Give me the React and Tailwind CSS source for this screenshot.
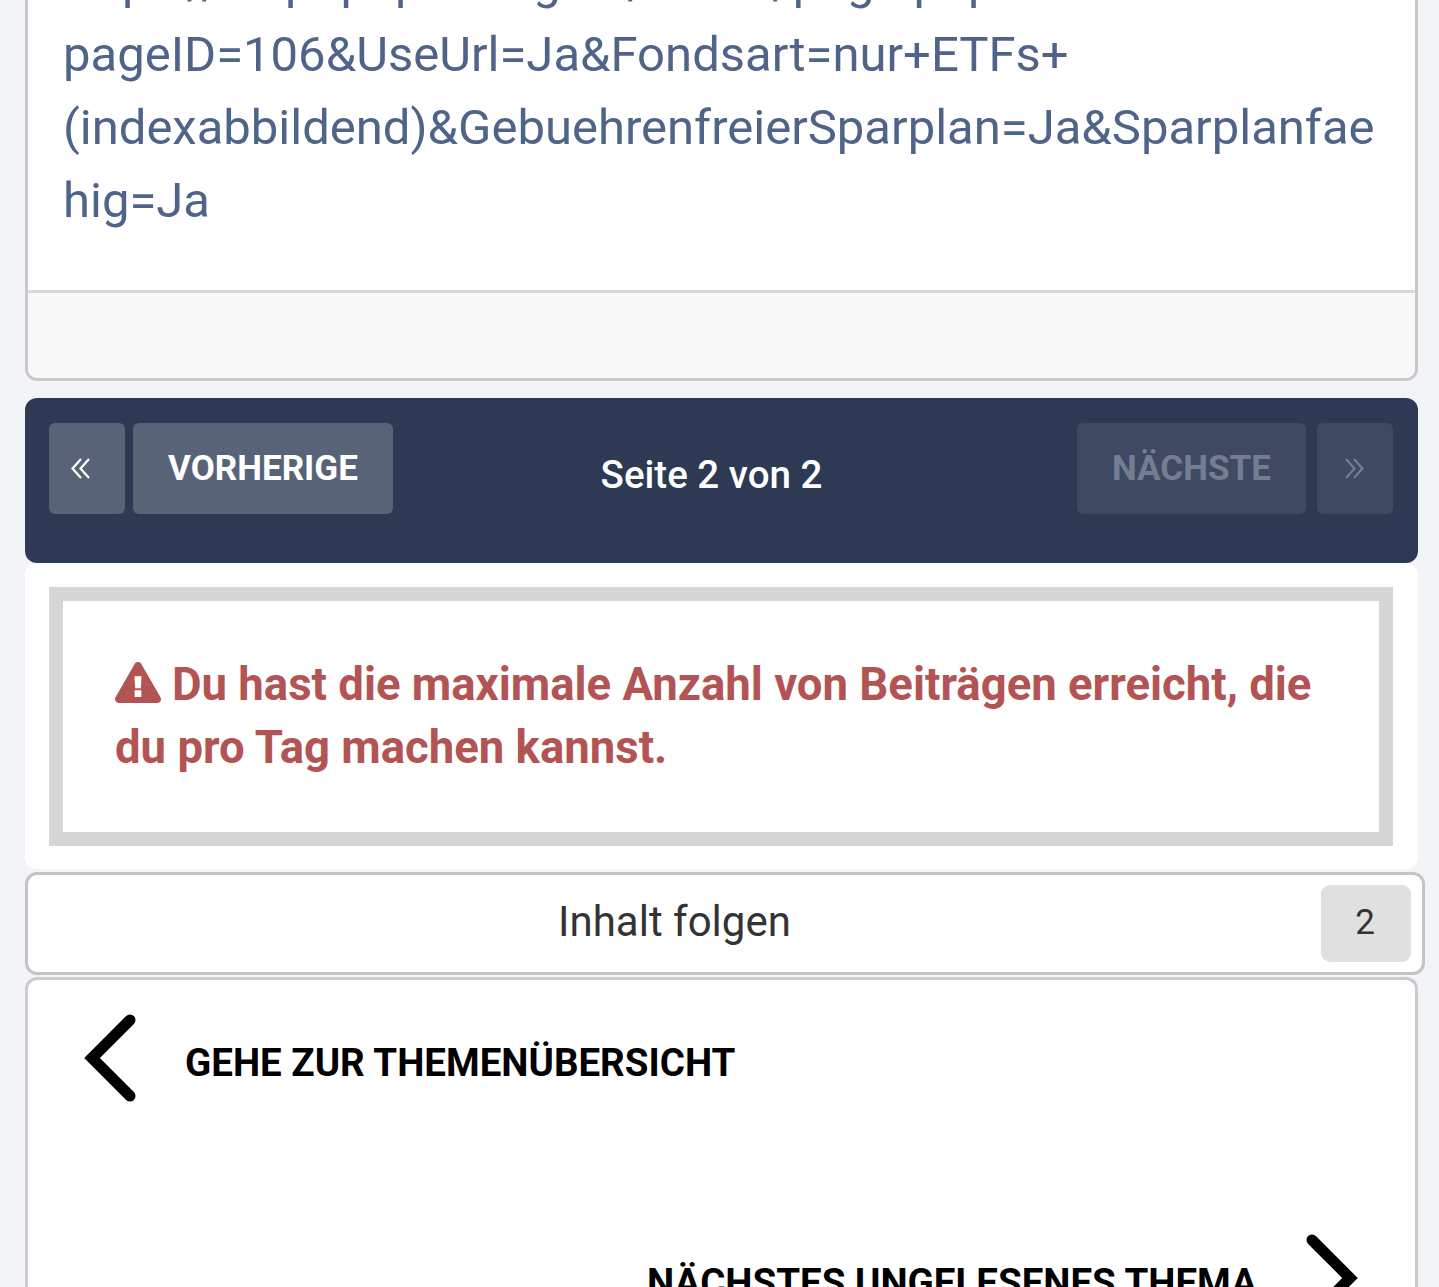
function Warning() {
  return (
    <svg viewBox="0 0 576 512" className="inline-block w-[46px] h-[41px] align-[-3px] mr-[11px]" fill="#b35454">
      <path d="M569.5 440C588 472 564.8 512 527.9 512H48.1c-37 0-60-40-41.6-72L246.4 24c18.500-32 64.700-32 83.200 0l239.900 416zM246 354v84h84v-84h-84zm-2-177l8 150h72l8-150h-88z" />
    </svg>
  )
}

function Chevron({ dir }) {
  return (
    <svg viewBox="0 0 52 88" className="w-[52px] h-[88px] shrink-0" fill="none" stroke="#000" strokeWidth="11" strokeLinecap="round" strokeLinejoin="miter">
      <path d={dir === 'left' ? 'M46 6 L8 44 L46 82' : 'M6 6 L44 44 L6 82'} />
    </svg>
  )
}

function DoubleArrow({ dir }) {
  return (
    <svg viewBox="0 0 19 21" className="w-[19px] h-[21px]" fill="none" stroke="currentColor" strokeWidth="2.2">
      <path d={dir === 'left' ? 'M10 1 L1.500 10.500 L10 20 M18 1 L9.500 10.500 L18 20' : 'M1 1 L9.500 10.500 L1 20 M9 1 L17.500 10.500 L9 20'} />
    </svg>
  )
}

export default function App() {
  return (
    <div className="h-[1287px] overflow-hidden bg-[#f2f4f8] font-['Roboto',sans-serif]">
      <div className="w-[1393px] ml-[25px]">
        {/* post card, scrolled off the top */}
        <div className="-mt-[55px] rounded-b-[12px] border-x-[3px] border-b-[3px] border-[#c9c9c9] bg-white">
          <div className="h-[345px] px-[35px] text-[49px] leading-[73px] text-[#4f6488] whitespace-nowrap">
            <div>https://ex.popup-rating.de/fonds/page.php?</div>
            <div>pageID=106&amp;UseUrl=Ja&amp;Fondsart=nur+ETFs+</div>
            <div>(indexabbildend)&amp;GebuehrenfreierSparplan=Ja&amp;Sparplanfae</div>
            <div>hig=Ja</div>
          </div>
          <div className="h-[88px] rounded-b-[9px] border-t-[3px] border-[#d9d9d9] bg-[#f8f8f8]" />
        </div>

        {/* pagination */}
        <div className="mt-[17px] h-[165px] rounded-[12px] bg-[#2e3954] pl-[24px] pr-[25px] pt-[25px] flex items-start">
          <div className="flex h-[91px] w-[76px] items-center justify-center rounded-[6px] bg-[#586377] pr-[13px] text-white">
            <DoubleArrow dir="left" />
          </div>
          <div className="ml-[8px] flex h-[91px] w-[260px] items-center justify-center rounded-[6px] bg-[#586377] pt-[2px] text-[35px] font-bold text-white">
            VORHERIGE
          </div>
          <div className="flex-1 pt-[29px] pr-[47px] text-center text-[38.500px] leading-[46px] font-medium text-white">Seite 2 von 2</div>
          <div className="flex h-[91px] w-[229px] items-center justify-center rounded-[6px] bg-[#3f4a62] pt-[2px] text-[35px] font-bold text-[#747e92]">
            NÄCHSTE
          </div>
          <div className="ml-[11px] flex h-[91px] w-[76px] items-center justify-center rounded-[6px] bg-[#3f4a62] pr-[1px] text-[#747e92]">
            <DoubleArrow dir="right" />
          </div>
        </div>

        {/* warning */}
        <div className="h-[306px] rounded-[12px] bg-white pl-[24px] pr-[25px] pt-[24px]">
          <div className="h-[259px] border-[14px] border-[#d6d6d6] pl-[52px] pr-[40px] pt-[52px] text-[45.500px] leading-[63px] font-bold text-[#b35454]">
            <Warning />Du hast die maximale Anzahl von Beiträgen erreicht, die du pro Tag machen kannst.
          </div>
        </div>

        {/* follow */}
        <div className="mt-[3px] -mr-[7px] flex h-[103px] items-center rounded-[12px] border-[3px] border-[#c4c4c4] bg-white">
          <span className="w-[1293px] pb-[4px] text-center text-[42px] text-[#333333]">Inhalt folgen</span>
          <span className="ml-auto mr-[11px] flex h-[77px] w-[90px] items-center justify-center rounded-[9px] bg-[#e0e0e0] pr-[2px] text-[35px] text-[#333333]">2</span>
        </div>

        {/* topic navigation */}
        <div className="mt-[2px] h-[400px] rounded-t-[12px] border-x-[3px] border-t-[3px] border-[#cbcbcb] bg-white">
          <div className="flex items-center pl-[56px] pt-[34px]">
            <Chevron dir="left" />
            <span className="ml-[49px] pt-[9px] text-[38.500px] font-bold text-black">GEHE ZUR THEMENÜBERSICHT</span>
          </div>
          <div className="mt-[132px] flex items-center justify-end pr-[57px]">
            <span className="mr-[49px] pt-[9px] text-[38.500px] font-bold text-black">NÄCHSTES UNGELESENES THEMA</span>
            <Chevron dir="right" />
          </div>
        </div>
      </div>
    </div>
  )
}
